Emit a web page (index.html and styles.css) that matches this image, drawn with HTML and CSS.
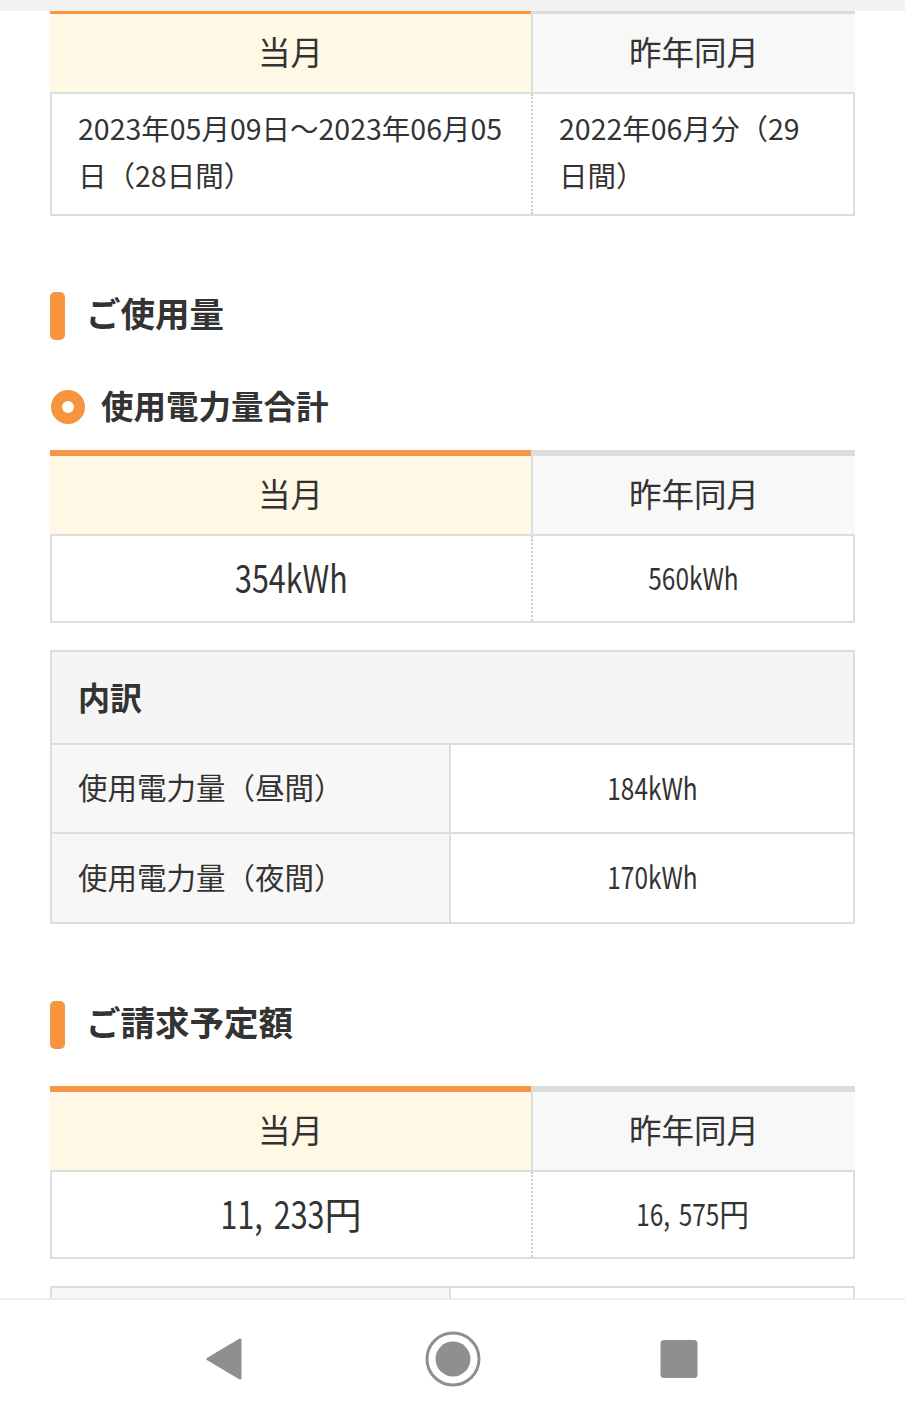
FILE: index.html
```html
<!DOCTYPE html>
<html lang="ja">
<head>
<meta charset="utf-8">
<title>ご使用量</title>
<link rel="stylesheet" href="styles.css">
</head>
<body>
<div class="strip"></div>
<main class="page">
  <div class="cmp first">
    <div class="hd cur">当月</div>
    <div class="hd prev">昨年同月</div>
    <div class="bd cur period">2023年05月09日～2023年06月05日（28日間）</div>
    <div class="bd prev period">2022年06月分（29日間）</div>
  </div>

  <h2 class="sec-title"><span class="bar"></span><span class="ttl">ご使用量</span></h2>

  <h3 class="sub-title"><span class="ring"></span><span class="ttl">使用電力量合計</span></h3>

  <div class="cmp">
    <div class="hd cur">当月</div>
    <div class="hd prev">昨年同月</div>
    <div class="bd cur value"><span class="num big">354kWh</span></div>
    <div class="bd prev value"><span class="num small">560kWh</span></div>
  </div>

  <div class="detail">
    <div class="detail-hd">内訳</div>
    <div class="detail-row">
      <div class="label">使用電力量（昼間）</div>
      <div class="val"><span class="num small">184kWh</span></div>
    </div>
    <div class="detail-row">
      <div class="label">使用電力量（夜間）</div>
      <div class="val"><span class="num small">170kWh</span></div>
    </div>
  </div>

  <h2 class="sec-title second"><span class="bar"></span><span class="ttl">ご請求予定額</span></h2>

  <div class="cmp">
    <div class="hd cur">当月</div>
    <div class="hd prev">昨年同月</div>
    <div class="bd cur value"><span class="num big">11<span class="sep">,</span>233<span class="yen">円</span></span></div>
    <div class="bd prev value"><span class="num small">16<span class="sep">,</span>575<span class="yen">円</span></span></div>
  </div>

  <div class="detail next">
    <div class="detail-row">
      <div class="label"></div>
      <div class="val"></div>
    </div>
    <div class="detail-row">
      <div class="label"></div>
      <div class="val"></div>
    </div>
  </div>
</main>

<nav class="sysnav">
  <span class="nav-btn">
    <svg width="60" height="60" viewBox="0 0 60 60"><path d="M43 11 L43 49 L11 30 Z" fill="#8f8f8f" stroke="#8f8f8f" stroke-width="3" stroke-linejoin="round"/></svg>
  </span>
  <span class="nav-btn">
    <svg width="60" height="60" viewBox="0 0 60 60"><circle cx="30" cy="30" r="26" fill="none" stroke="#8f8f8f" stroke-width="3"/><circle cx="30" cy="30" r="17.5" fill="#8f8f8f"/></svg>
  </span>
  <span class="nav-btn">
    <svg width="60" height="60" viewBox="0 0 60 60"><rect x="11.5" y="11" width="37" height="38" rx="3.5" fill="#8f8f8f"/></svg>
  </span>
</nav>
</body>
</html>
```

FILE: styles.css
```css
* { box-sizing: border-box; }

html, body {
  margin: 0;
  padding: 0;
  background: #ffffff;
}

body {
  font-family: "Noto Sans CJK JP", "Noto Sans", sans-serif;
  color: #333333;
  width: 905px;
}

/* fixed app header edge lying over the scrolled content */
.strip {
  position: fixed;
  top: 0;
  left: 0;
  right: 0;
  height: 11px;
  background: #f2f2f2;
  z-index: 5;
}

.page {
  padding: 8px 50px 200px 50px;
}

/* comparison tables */
.cmp {
  display: grid;
  grid-template-columns: 479px 1fr;
  border-left: 2px solid #dddddd;
  border-right: 2px solid #dddddd;
  border-bottom: 2px solid #dddddd;
}

.hd {
  height: 86px;
  display: flex;
  align-items: center;
  justify-content: center;
  font-size: 32.5px;
  line-height: 1;
  padding-bottom: 3px;
  border-bottom: 2px solid #dddddd;
  border-top: 6px solid #dddddd;
}

.hd.cur {
  background: #fff8e5;
  border-top-color: #f79646;
  margin-left: -2px;
}

.hd.prev {
  background: #f8f8f8;
  border-left: 2px solid #dddddd;
  margin-right: -2px;
}

.bd.prev {
  border-left: 2px dotted #cccccc;
}

.period {
  font-size: 28.5px;
  line-height: 47px;
  padding: 10px 14px 16px 26px;
}

.bd.prev.period {
  padding-right: 40px;
}

.value {
  height: 85px;
  display: flex;
  align-items: center;
  justify-content: center;
  line-height: 1;
  padding-bottom: 3px;
}

.num {
  display: inline-block;
  transform: scaleX(0.8);
  white-space: nowrap;
}

.big { font-size: 38px; }
.small { font-size: 30.5px; }

.sep { margin-right: 0.36em; }

.yen {
  display: inline-block;
  transform: scaleX(1.22);
  transform-origin: left center;
  margin-right: 0.22em;
}

/* section headings */
.sec-title {
  display: flex;
  align-items: center;
  gap: 21px;
  margin: 76px 0 0 0;
  height: 48px;
  font-size: 34.5px;
  line-height: 1;
  font-weight: bold;
  color: #333333;
}

.sec-title .ttl { margin-bottom: 7px; }

.sec-title.second { margin-top: 77px; }

.bar {
  width: 15px;
  height: 48px;
  border-radius: 5px;
  background: #f7943e;
}

.sub-title {
  display: flex;
  align-items: center;
  gap: 16px;
  margin: 50px 0 0 0;
  height: 34px;
  font-size: 32.5px;
  line-height: 1;
  font-weight: bold;
  color: #333333;
}

.sub-title .ttl { margin-bottom: 4px; }

.ring {
  width: 34px;
  height: 34px;
  border-radius: 50%;
  border: 11px solid #f7943e;
  margin-left: 1px;
}

.sub-title + .cmp { margin-top: 26px; }

.sec-title + .cmp { margin-top: 37px; }

/* detail tables */
.detail {
  margin-top: 27px;
  border: 2px solid #dddddd;
}

.detail-hd {
  height: 93px;
  display: flex;
  align-items: center;
  padding-left: 26px;
  padding-bottom: 3px;
  font-size: 32px;
  line-height: 1;
  font-weight: bold;
  background: #f5f5f5;
  border-bottom: 2px solid #dddddd;
}

.detail-row {
  display: grid;
  grid-template-columns: 399px 1fr;
  height: 89px;
  border-bottom: 2px solid #dddddd;
}

.detail-row:last-child { border-bottom: 0; height: 88px; }

.label {
  display: flex;
  align-items: center;
  padding-left: 26px;
  padding-bottom: 3px;
  font-size: 29.5px;
  line-height: 1;
  background: #f7f7f7;
  border-right: 2px solid #dddddd;
}

.val {
  display: flex;
  align-items: center;
  justify-content: center;
  padding-bottom: 3px;
  line-height: 1;
  background: #ffffff;
}

/* system navigation bar */
.sysnav {
  position: fixed;
  left: 0;
  right: 0;
  bottom: 0;
  height: 120px;
  background: #ffffff;
  border-top: 2px solid #ececec;
  display: flex;
  align-items: center;
  justify-content: center;
  gap: 166px;
  z-index: 5;
}

.nav-btn {
  width: 60px;
  height: 60px;
  display: block;
}

.nav-btn svg { display: block; }
```
